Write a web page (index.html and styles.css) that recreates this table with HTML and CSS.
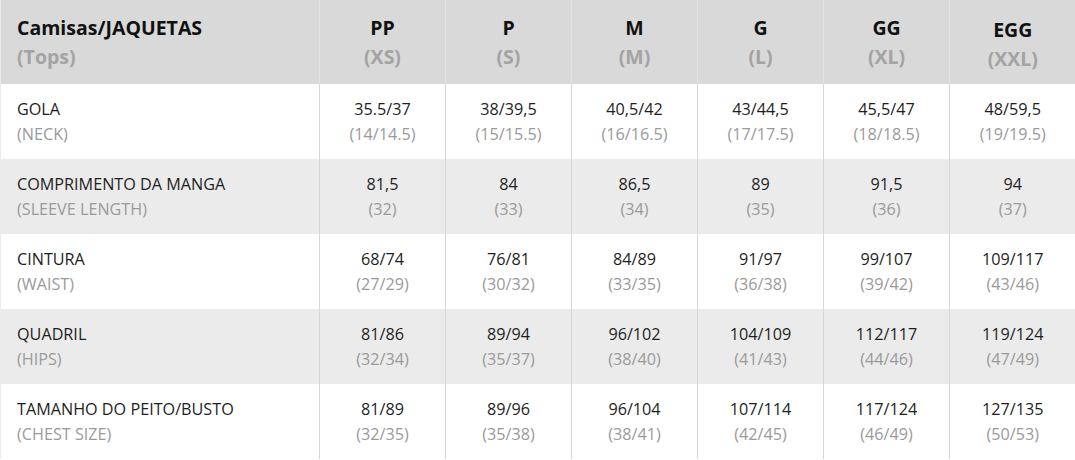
FILE: index.html
```html
<!DOCTYPE html>
<html lang="pt">
<head>
<meta charset="utf-8">
<title>Tabela de medidas</title>
<link rel="stylesheet" href="styles.css">
</head>
<body>
<table class="sizes">
  <colgroup>
    <col class="c-label">
    <col class="c-size"><col class="c-size"><col class="c-size">
    <col class="c-size"><col class="c-size"><col class="c-size">
  </colgroup>
  <thead>
    <tr>
      <th class="label"><span class="main">Camisas/JAQUETAS</span><span class="sub">(Tops)</span></th>
      <th><span class="main">PP</span><span class="sub">(XS)</span></th>
      <th><span class="main">P</span><span class="sub">(S)</span></th>
      <th><span class="main">M</span><span class="sub">(M)</span></th>
      <th><span class="main">G</span><span class="sub">(L)</span></th>
      <th><span class="main">GG</span><span class="sub">(XL)</span></th>
      <th class="egg"><span class="main">EGG</span><span class="sub">(XXL)</span></th>
    </tr>
  </thead>
  <tbody>
    <tr>
      <td class="label"><span class="main">GOLA</span><span class="sub">(NECK)</span></td>
      <td><span class="main">35.5/37</span><span class="sub">(14/14.5)</span></td>
      <td><span class="main">38/39,5</span><span class="sub">(15/15.5)</span></td>
      <td><span class="main">40,5/42</span><span class="sub">(16/16.5)</span></td>
      <td><span class="main">43/44,5</span><span class="sub">(17/17.5)</span></td>
      <td><span class="main">45,5/47</span><span class="sub">(18/18.5)</span></td>
      <td><span class="main">48/59,5</span><span class="sub">(19/19.5)</span></td>
    </tr>
    <tr>
      <td class="label"><span class="main">COMPRIMENTO DA MANGA</span><span class="sub">(SLEEVE LENGTH)</span></td>
      <td><span class="main">81,5</span><span class="sub">(32)</span></td>
      <td><span class="main">84</span><span class="sub">(33)</span></td>
      <td><span class="main">86,5</span><span class="sub">(34)</span></td>
      <td><span class="main">89</span><span class="sub">(35)</span></td>
      <td><span class="main">91,5</span><span class="sub">(36)</span></td>
      <td><span class="main">94</span><span class="sub">(37)</span></td>
    </tr>
    <tr>
      <td class="label"><span class="main">CINTURA</span><span class="sub">(WAIST)</span></td>
      <td><span class="main">68/74</span><span class="sub">(27/29)</span></td>
      <td><span class="main">76/81</span><span class="sub">(30/32)</span></td>
      <td><span class="main">84/89</span><span class="sub">(33/35)</span></td>
      <td><span class="main">91/97</span><span class="sub">(36/38)</span></td>
      <td><span class="main">99/107</span><span class="sub">(39/42)</span></td>
      <td><span class="main">109/117</span><span class="sub">(43/46)</span></td>
    </tr>
    <tr>
      <td class="label"><span class="main">QUADRIL</span><span class="sub">(HIPS)</span></td>
      <td><span class="main">81/86</span><span class="sub">(32/34)</span></td>
      <td><span class="main">89/94</span><span class="sub">(35/37)</span></td>
      <td><span class="main">96/102</span><span class="sub">(38/40)</span></td>
      <td><span class="main">104/109</span><span class="sub">(41/43)</span></td>
      <td><span class="main">112/117</span><span class="sub">(44/46)</span></td>
      <td><span class="main">119/124</span><span class="sub">(47/49)</span></td>
    </tr>
    <tr>
      <td class="label"><span class="main">TAMANHO DO PEITO/BUSTO</span><span class="sub">(CHEST SIZE)</span></td>
      <td><span class="main">81/89</span><span class="sub">(32/35)</span></td>
      <td><span class="main">89/96</span><span class="sub">(35/38)</span></td>
      <td><span class="main">96/104</span><span class="sub">(38/41)</span></td>
      <td><span class="main">107/114</span><span class="sub">(42/45)</span></td>
      <td><span class="main">117/124</span><span class="sub">(46/49)</span></td>
      <td><span class="main">127/135</span><span class="sub">(50/53)</span></td>
    </tr>
  </tbody>
</table>
</body>
</html>
```

FILE: styles.css
```css
* { box-sizing: border-box; }

html, body {
  margin: 0;
  padding: 0;
  background: #ffffff;
}

body {
  font-family: "Open Sans", "Liberation Sans", sans-serif;
  color: #222222;
  width: 1075px;
  height: 460px;
  overflow: hidden;
}

.sizes {
  width: 1075px;
  border-collapse: collapse;
  table-layout: fixed;
}

.c-label { width: 319px; }
.c-size { width: 126px; }

.sizes th,
.sizes td {
  text-align: center;
  vertical-align: middle;
  padding: 0;
  border-left: 1px solid #d6d6d6;
}

.sizes th:first-child,
.sizes td:first-child {
  border-left: 1px solid #ececec;
}

.sizes th.label,
.sizes td.label {
  text-align: left;
  padding-left: 16px;
}

.sizes thead tr {
  height: 84px;
  background: #d9d9d9;
}

.sizes thead th {
  border-left-color: #e3e3e3;
  font-weight: 700;
}

.sizes thead .main {
  display: block;
  font-size: 19.5px;
  line-height: 29px;
  color: #111111;
}

.sizes thead .sub {
  display: block;
  font-size: 19.5px;
  line-height: 29px;
  color: #a3a3a3;
}

.sizes thead th.egg .main,
.sizes thead th.egg .sub {
  position: relative;
  top: 2px;
}

.sizes tbody tr {
  height: 75px;
}

.sizes tbody tr:nth-child(even) {
  background: #ebebeb;
}

.sizes tbody .main {
  display: block;
  font-size: 16.2px;
  line-height: 25px;
  color: #1e1e1e;
}

.sizes tbody .sub {
  display: block;
  font-size: 16.2px;
  line-height: 25px;
  color: #9a9a9a;
}
```
